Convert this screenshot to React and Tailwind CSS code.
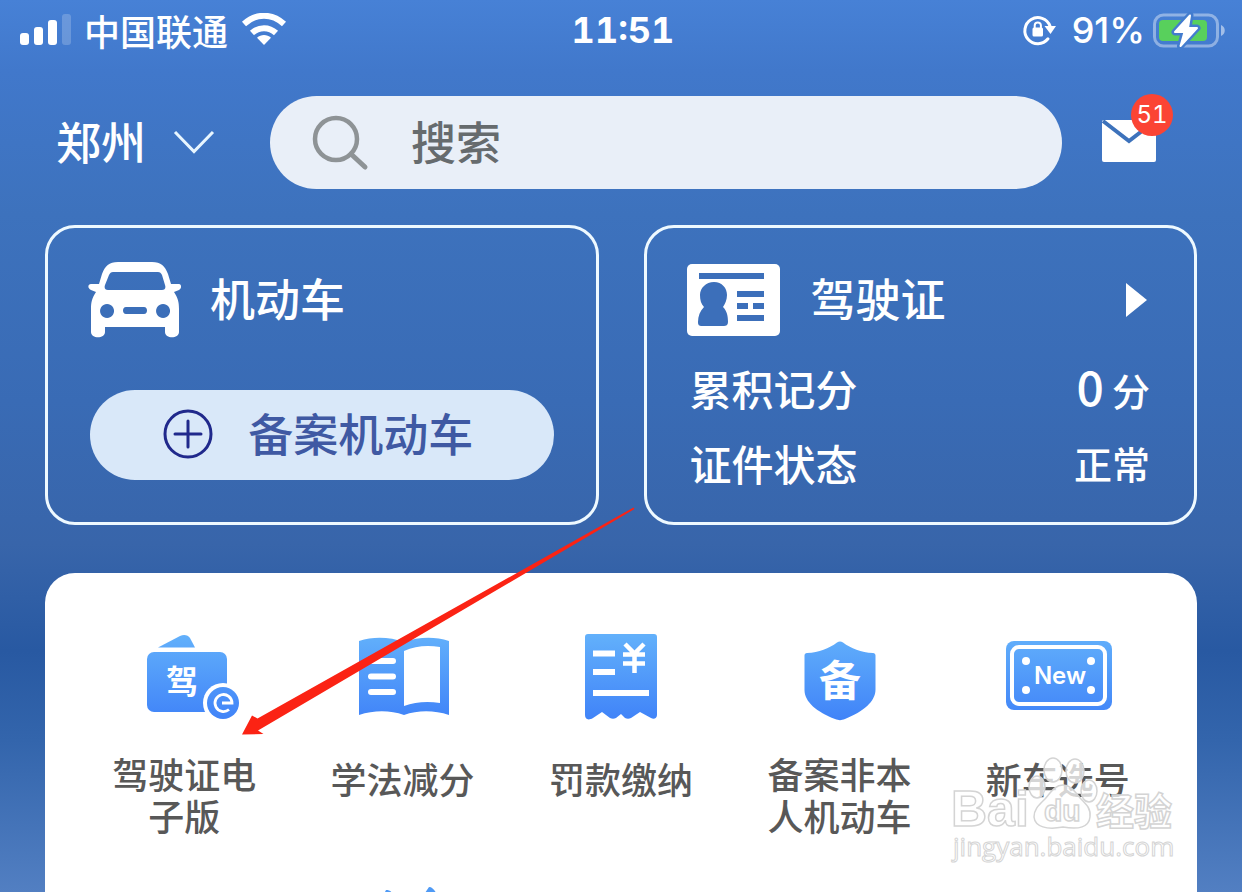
import React from "react";

const BLUE = "url(#tile-blue)";

function TileGradient() {
  return (
    <svg className="absolute h-0 w-0" aria-hidden="true">
      <defs>
        <linearGradient id="tile-blue" gradientUnits="userSpaceOnUse" x1="0" y1="5" x2="0" y2="90">
          <stop offset="0" stopColor="#62b0fb" />
          <stop offset="1" stopColor="#4083f8" />
        </linearGradient>
      </defs>
    </svg>
  );
}

function StatusBar() {
  return (
    <div className="grid h-16 shrink-0 grid-cols-[1fr_auto_1fr] items-center pr-4 pb-1 pl-5 text-white">
      <div className="flex items-center gap-3">
        <svg width="52" height="34" viewBox="0 0 52 34" fill="#fff" aria-hidden="true">
          <rect x="0" y="20" width="9" height="12" rx="3" />
          <rect x="14" y="14" width="9" height="18" rx="3" />
          <rect x="28" y="7" width="9" height="25" rx="3" />
          <rect x="42" y="1" width="9" height="31" rx="3" opacity="0.2" />
        </svg>
        <span className="text-[36px] leading-[48px] font-medium">中国联通</span>
        <svg width="50" height="34" viewBox="-2 0 50 34" aria-hidden="true">
          <g fill="none" stroke="#fff" strokeWidth="6">
            <path d="M2 11C14 0 30 0 42 11" />
            <path d="M10 20C17 13.500 27 13.500 34 20" />
          </g>
          <path fill="#fff" d="M22 32l-7-7.200c4-3.600 10-3.600 14 0z" />
        </svg>
      </div>
      <div className="font-[Inter,sans-serif] text-[36px] leading-[48px] font-bold tabular-nums">11:51</div>
      <div className="flex items-center justify-end gap-2">
        <svg width="34" height="34" viewBox="0 0 34 34" aria-hidden="true">
          <path
            d="M26 25.800A13 13 0 1 1 28 13"
            fill="none"
            stroke="#fff"
            strokeWidth="3"
            strokeLinecap="round"
          />
          <path d="M22.500 13h11.500l-5.500 8z" fill="#fff" />
          <rect x="10.500" y="14.500" width="10.500" height="9" rx="1.500" fill="#fff" />
          <path d="M12.700 15.500v-3a3.100 3.100 0 0 1 6.200 0v3" fill="none" stroke="#fff" strokeWidth="2" />
        </svg>
        <span className="pl-2 font-[Inter,sans-serif] text-[36px] leading-[48px] font-medium">91%</span>
        <svg width="73" height="38" viewBox="0 0 73 38" aria-hidden="true">
          <rect x="1.500" y="4" width="63" height="31" rx="9" fill="none" stroke="#fff" strokeOpacity="0.4" strokeWidth="3" />
          <path d="M68 14c5 2 5 9 0 11z" fill="#fff" fillOpacity="0.5" />
          <rect x="6" y="9" width="48" height="21" rx="4" fill="#58d05c" />
          <path d="M37 4.500L22 21h9.500l-4 14L44 17h-9z" fill="#437cce" stroke="#437cce" strokeWidth="7" strokeLinejoin="round" />
          <path d="M37 4.500L22 21h9.500l-4 14L44 17h-9z" fill="#fff" stroke="#fff" strokeWidth="2" strokeLinejoin="round" />
        </svg>
      </div>
    </div>
  );
}

function Header() {
  return (
    <header className="mt-8 flex h-[93px] shrink-0 items-center pr-[82px] pl-[56px]">
      <label className="grid w-[160px] shrink-0 items-center text-white">
        <select
          aria-label="城市"
          className="col-start-1 row-start-1 w-full appearance-none bg-transparent pb-1 text-[45px] leading-[60px] font-medium outline-none"
        >
          <option>郑州</option>
        </select>
        <svg
          className="pointer-events-none col-start-1 row-start-1 justify-self-end"
          width="44"
          height="28"
          viewBox="0 0 44 28"
          fill="none"
          stroke="#e8f6ff"
          strokeWidth="3"
          aria-hidden="true"
        >
          <path d="M3 3l19 19.500L41 3" />
        </svg>
      </label>
      <label className="ml-[54px] flex h-full min-w-0 flex-1 items-center gap-[41px] rounded-full bg-[#e9eff8] px-[42px]">
        <svg className="shrink-0" width="58" height="58" viewBox="0 0 58 58" fill="none" stroke="#8e9396" aria-hidden="true">
          <circle cx="24" cy="25" r="21" strokeWidth="4.500" />
          <path d="M39 40l14 13" strokeWidth="5" strokeLinecap="round" />
        </svg>
        <input
          type="search"
          aria-label="搜索"
          placeholder="搜索"
          className="min-w-0 flex-1 bg-transparent pb-1 text-[45px] leading-[60px] font-medium text-[#666b6e] outline-none placeholder:text-[#666b6e]"
        />
      </label>
      <button type="button" aria-label="消息" className="relative mb-1 ml-[38px] shrink-0">
        <svg width="60" height="46" viewBox="0 0 60 46" aria-hidden="true">
          <rect x="2" y="2" width="54" height="42" rx="2" fill="#fff" />
          <path d="M3 3l26 20L55 3" fill="none" stroke="#3d72bb" strokeWidth="4" />
        </svg>
        <span className="absolute -top-[24px] left-[31px] flex h-[42px] w-[42px] items-center justify-center rounded-full bg-[#fb4434] font-[Inter,sans-serif] text-2xl text-white tabular-nums">
          51
        </span>
      </button>
    </header>
  );
}

function VehicleCard() {
  return (
    <section className="h-[300px] rounded-[30px] border-[3px] border-[#eef9ff] px-10 pt-[34px]">
      <div className="flex h-[76px] items-center gap-7 text-white">
        <svg width="94" height="76" viewBox="0 0 94 76" aria-hidden="true">
          <path
            fill="#fff"
            fillRule="evenodd"
            d="M30 0h34c9 0 13 4 16 12l3 10h8c2.500 0 3 4 0 6l-5 2c4 6 5 10 5 17v23c0 7-14 7-14 0v-5H17v5c0 7-14 7-14 0V47c0-7 1-11 5-17l-5-2c-4-2-3-6 0-6h8l3-10C17 4 21 0 30 0zM25 10c-2 0-3 1-4 3l-4 10c-1 3 0 5 3 5h54c3 0 4-2 3-5l-3-10c-1-2-2-3-4-3zM19 42a7 7 0 1 0 .1 0zM75 42a7 7 0 1 0 .1 0zM38 45c-4 0-4 7 0 7h18c4 0 4-7 0-7z"
          />
        </svg>
        <h2 className="pb-1 text-[45px] leading-[60px] font-medium">机动车</h2>
      </div>
      <div className="mt-[52px] px-0.5">
        <button
          type="button"
          className="flex h-[90px] w-full items-center justify-center gap-[34px] rounded-full bg-[#d9e8f9] pr-2 pb-1 text-[#3f59a3]"
        >
          <svg width="52" height="52" viewBox="0 0 52 52" fill="none" stroke="#20298c" strokeWidth="3" aria-hidden="true">
            <circle cx="26" cy="27" r="23" />
            <path d="M26 14v26M13 27h26" strokeLinecap="round" />
          </svg>
          <span className="text-[45px] leading-[60px] font-medium">备案机动车</span>
        </button>
      </div>
    </section>
  );
}

function LicenseCard() {
  return (
    <section className="h-[300px] rounded-[30px] border-[3px] border-[#eef9ff] px-10 pt-[34px] text-white">
      <a href="#license" className="flex h-[76px] items-center gap-[30px]">
        <svg width="94" height="72" viewBox="0 0 94 72" aria-hidden="true">
          <rect width="93" height="72" rx="5" fill="#fff" />
          <g fill="#3c6fba">
            <rect x="12" y="9" width="65" height="6" />
            <path d="M27 18c8 0 13 6 13 13 0 5-2 9-4 12 4 4 5 9 5 15 0 3-2 4-4 4H15c-3 0-4-1-4-4 0-6 2-11 6-15-3-3-4-7-4-12 0-7 6-13 14-13z" />
            <rect x="50" y="27" width="27" height="6" />
            <rect x="50" y="39" width="11" height="6" />
            <rect x="66" y="39" width="11" height="6" />
            <rect x="50" y="51" width="27" height="6" />
          </g>
        </svg>
        <h2 className="flex-1 pb-1 text-[45px] leading-[60px] font-medium">驾驶证</h2>
        <svg className="mr-[6px]" width="22" height="34" viewBox="0 0 22 34" fill="#fff" aria-hidden="true">
          <path d="M0 0l21 17L0 34z" />
        </svg>
      </a>
      <dl className="mt-3 pr-1 pl-[3px] font-medium">
        <div className="flex h-[75px] items-center justify-between">
          <dt className="text-[42px] leading-[60px]">累积记分</dt>
          <dd className="flex items-baseline gap-2 text-[38px] leading-[60px]">
            <span className="text-[48px]">0</span>分
          </dd>
        </div>
        <div className="flex h-[75px] items-center justify-between">
          <dt className="text-[42px] leading-[60px]">证件状态</dt>
          <dd className="text-[38px] leading-[60px]">正常</dd>
        </div>
      </dl>
    </section>
  );
}

function TileIcon({ children }) {
  return (
    <svg width="120" height="100" viewBox="0 0 120 100" aria-hidden="true">
      {children}
    </svg>
  );
}

function WalletIcon() {
  return (
    <TileIcon>
      <path d="M34 17.500L56 6c4-2 8-1 10 2l5 9.500z" fill={BLUE} />
      <rect x="23" y="22" width="80" height="60" rx="7" fill={BLUE} />
      <text x="58" y="63" textAnchor="middle" fontSize="32" fontWeight="700" fill="#fff">驾</text>
      <circle cx="99" cy="73" r="20" fill="#fff" />
      <circle cx="99" cy="73" r="16" fill={BLUE} />
      <path d="M98 73h10a8.500 8.500 0 1 0-3 6.500" fill="none" stroke="#fff" strokeWidth="2.800" />
    </TileIcon>
  );
}

function BookIcon() {
  return (
    <TileIcon>
      <path d="M16 11c15-5 31-4 45 1 14-5 30-6 45-1v74c-15-5-31-5-45 0-14-5-30-5-45 0z" fill={BLUE} />
      <path d="M61 21c11-5 23-6 36-4v56c-13-2-25-1-36 3z" fill="#fff" />
      <path d="M28 31h22M28 46.500h22M28 62h22" stroke="#fff" strokeWidth="6" strokeLinecap="round" />
    </TileIcon>
  );
}

function ReceiptIcon() {
  return (
    <TileIcon>
      <path
        d="M27 4h66c2 0 3 1 3 3v78c0 3-3 5-6 3l-11-6-9 6c-2 1-4 1-6 0l-4-4-5 4c-2 1-4 1-6 0l-8-6-9 6c-5 3-8 1-8-3V7c0-2 1-3 3-3z"
        fill={BLUE}
      />
      <path d="M32 23.500h22M32 42h22M32 63h56" stroke="#fff" strokeWidth="6" />
      <path d="M64 14l9.500 9.500 9.500-9.500M62 24.500h22M62 33.500h22M73.500 22v21" fill="none" stroke="#fff" strokeWidth="4.500" />
    </TileIcon>
  );
}

function ShieldIcon() {
  return (
    <TileIcon>
      <path d="M58 12.500c2-1.500 4-1.500 6 0 8 6 18 10 30 10.500 1.500 0 2.500 1 2.500 2.500v34c0 12-12 22-30.500 29.500-4 1.500-6 1.500-10 0C38 82 25.500 72 25.500 60V25.500c0-1.500 1-2.500 2.500-2.500 12-.500 22-4.500 30-10.500z" fill={BLUE} />
      <text x="61" y="66" textAnchor="middle" fontSize="42" fontWeight="700" fill="#fff">备</text>
    </TileIcon>
  );
}

function PlateIcon() {
  return (
    <TileIcon>
      <rect x="8" y="11" width="106" height="69" rx="8" fill={BLUE} />
      <rect x="14" y="17" width="93" height="57" rx="7" fill="none" stroke="#fff" strokeWidth="4" />
      <g fill="#fff">
        <circle cx="28" cy="31" r="4" />
        <circle cx="93" cy="31" r="4" />
        <circle cx="28" cy="60" r="4" />
        <circle cx="93" cy="60" r="4" />
      </g>
      <text x="62" y="54" textAnchor="middle" fontFamily="Inter, sans-serif" fontSize="24" fontWeight="600" fill="#fff">New</text>
    </TileIcon>
  );
}

const SERVICES = [
  { label: "驾驶证电子版", Icon: WalletIcon, lines: "leading-[42px]" },
  { label: "学法减分", Icon: BookIcon, lines: "leading-[52px]" },
  { label: "罚款缴纳", Icon: ReceiptIcon, lines: "leading-[52px]" },
  { label: "备案非本人机动车", Icon: ShieldIcon, lines: "leading-[42px]" },
  { label: "新车选号", Icon: PlateIcon, lines: "leading-[52px]" },
];

function Services() {
  return (
    <nav className="mx-[45px] mt-12 flex-1 rounded-t-[30px] bg-white px-[30px] pt-[57px]">
      <ul className="grid grid-cols-5">
        {SERVICES.map(({ label, Icon, lines }) => (
          <li key={label}>
            <a href="#service" className="flex flex-col items-center gap-[22px] text-center text-[#585858]">
              <Icon />
              <span className={`w-[146px] text-[36px] font-medium ${lines}`}>{label}</span>
            </a>
          </li>
        ))}
      </ul>
      <div className="mt-12 grid grid-cols-5">
        <svg className="col-start-2 justify-self-center" width="120" height="12" viewBox="0 0 120 12" fill="#4f9af5" aria-hidden="true">
          <path d="M43 6c4 0 6 2 8 6H40zM86 3c4 0 6 4 9 9H80z" />
        </svg>
      </div>
    </nav>
  );
}

function Arrow() {
  return (
    <svg className="pointer-events-none absolute top-[500px] left-[230px]" width="410" height="244" viewBox="0 0 410 244" aria-hidden="true">
      <path d="M12 234.500L22 215.500l5.500 3L403.500 7.500l1 1.500L28 230.500l5.500 3.500z" fill="#fb2314" />
    </svg>
  );
}

function Watermark() {
  return (
    <svg
      className="pointer-events-none absolute right-[62px] bottom-[24px]"
      width="234"
      height="114"
      viewBox="0 0 234 114"
      fill="#fff"
      fillOpacity="0.75"
      stroke="#d4d4d4"
      strokeWidth="1.500"
      aria-hidden="true"
    >
      <ellipse cx="107" cy="16" rx="9" ry="12" />
      <ellipse cx="129" cy="17" rx="9" ry="12" />
      <ellipse cx="91" cy="33" rx="8" ry="11" />
      <ellipse cx="143" cy="37" rx="8" ry="11" />
      <path d="M117 31c8 0 12 7 18 14 6 6 10 10 9 18-1 10-11 13-27 10-16 3-28 0-29-10 0-8 5-12 11-18 6-7 10-14 18-14z" />
      <text x="5" y="72" fontFamily="'Liberation Sans', sans-serif" fontSize="50" fontWeight="700">Bai</text>
      <text x="98" y="67" fontFamily="'Liberation Sans', sans-serif" fontSize="30" fontWeight="700">du</text>
      <text x="150" y="71" fontSize="38" fontWeight="700">经验</text>
      <text x="7" y="102" fontFamily="'Open Sans', sans-serif" fontSize="26" strokeWidth="1">jingyan.baidu.com</text>
    </svg>
  );
}

export default function App() {
  return (
    <div className="relative flex h-screen flex-col overflow-hidden bg-[linear-gradient(#4781d6_0%,#4178cb_8%,#3d72bd_24%,#396bb5_45%,#3865aa_61%,#2859a2_73%,#3365ac_83%,#527fc2_100%)] font-['Noto_Sans_CJK_SC',sans-serif]">
      <TileGradient />
      <StatusBar />
      <Header />
      <main className="flex flex-1 flex-col">
        <div className="mx-[45px] mt-9 grid shrink-0 grid-cols-2 gap-[45px]">
          <VehicleCard />
          <LicenseCard />
        </div>
        <Services />
      </main>
      <Arrow />
      <Watermark />
    </div>
  );
}
